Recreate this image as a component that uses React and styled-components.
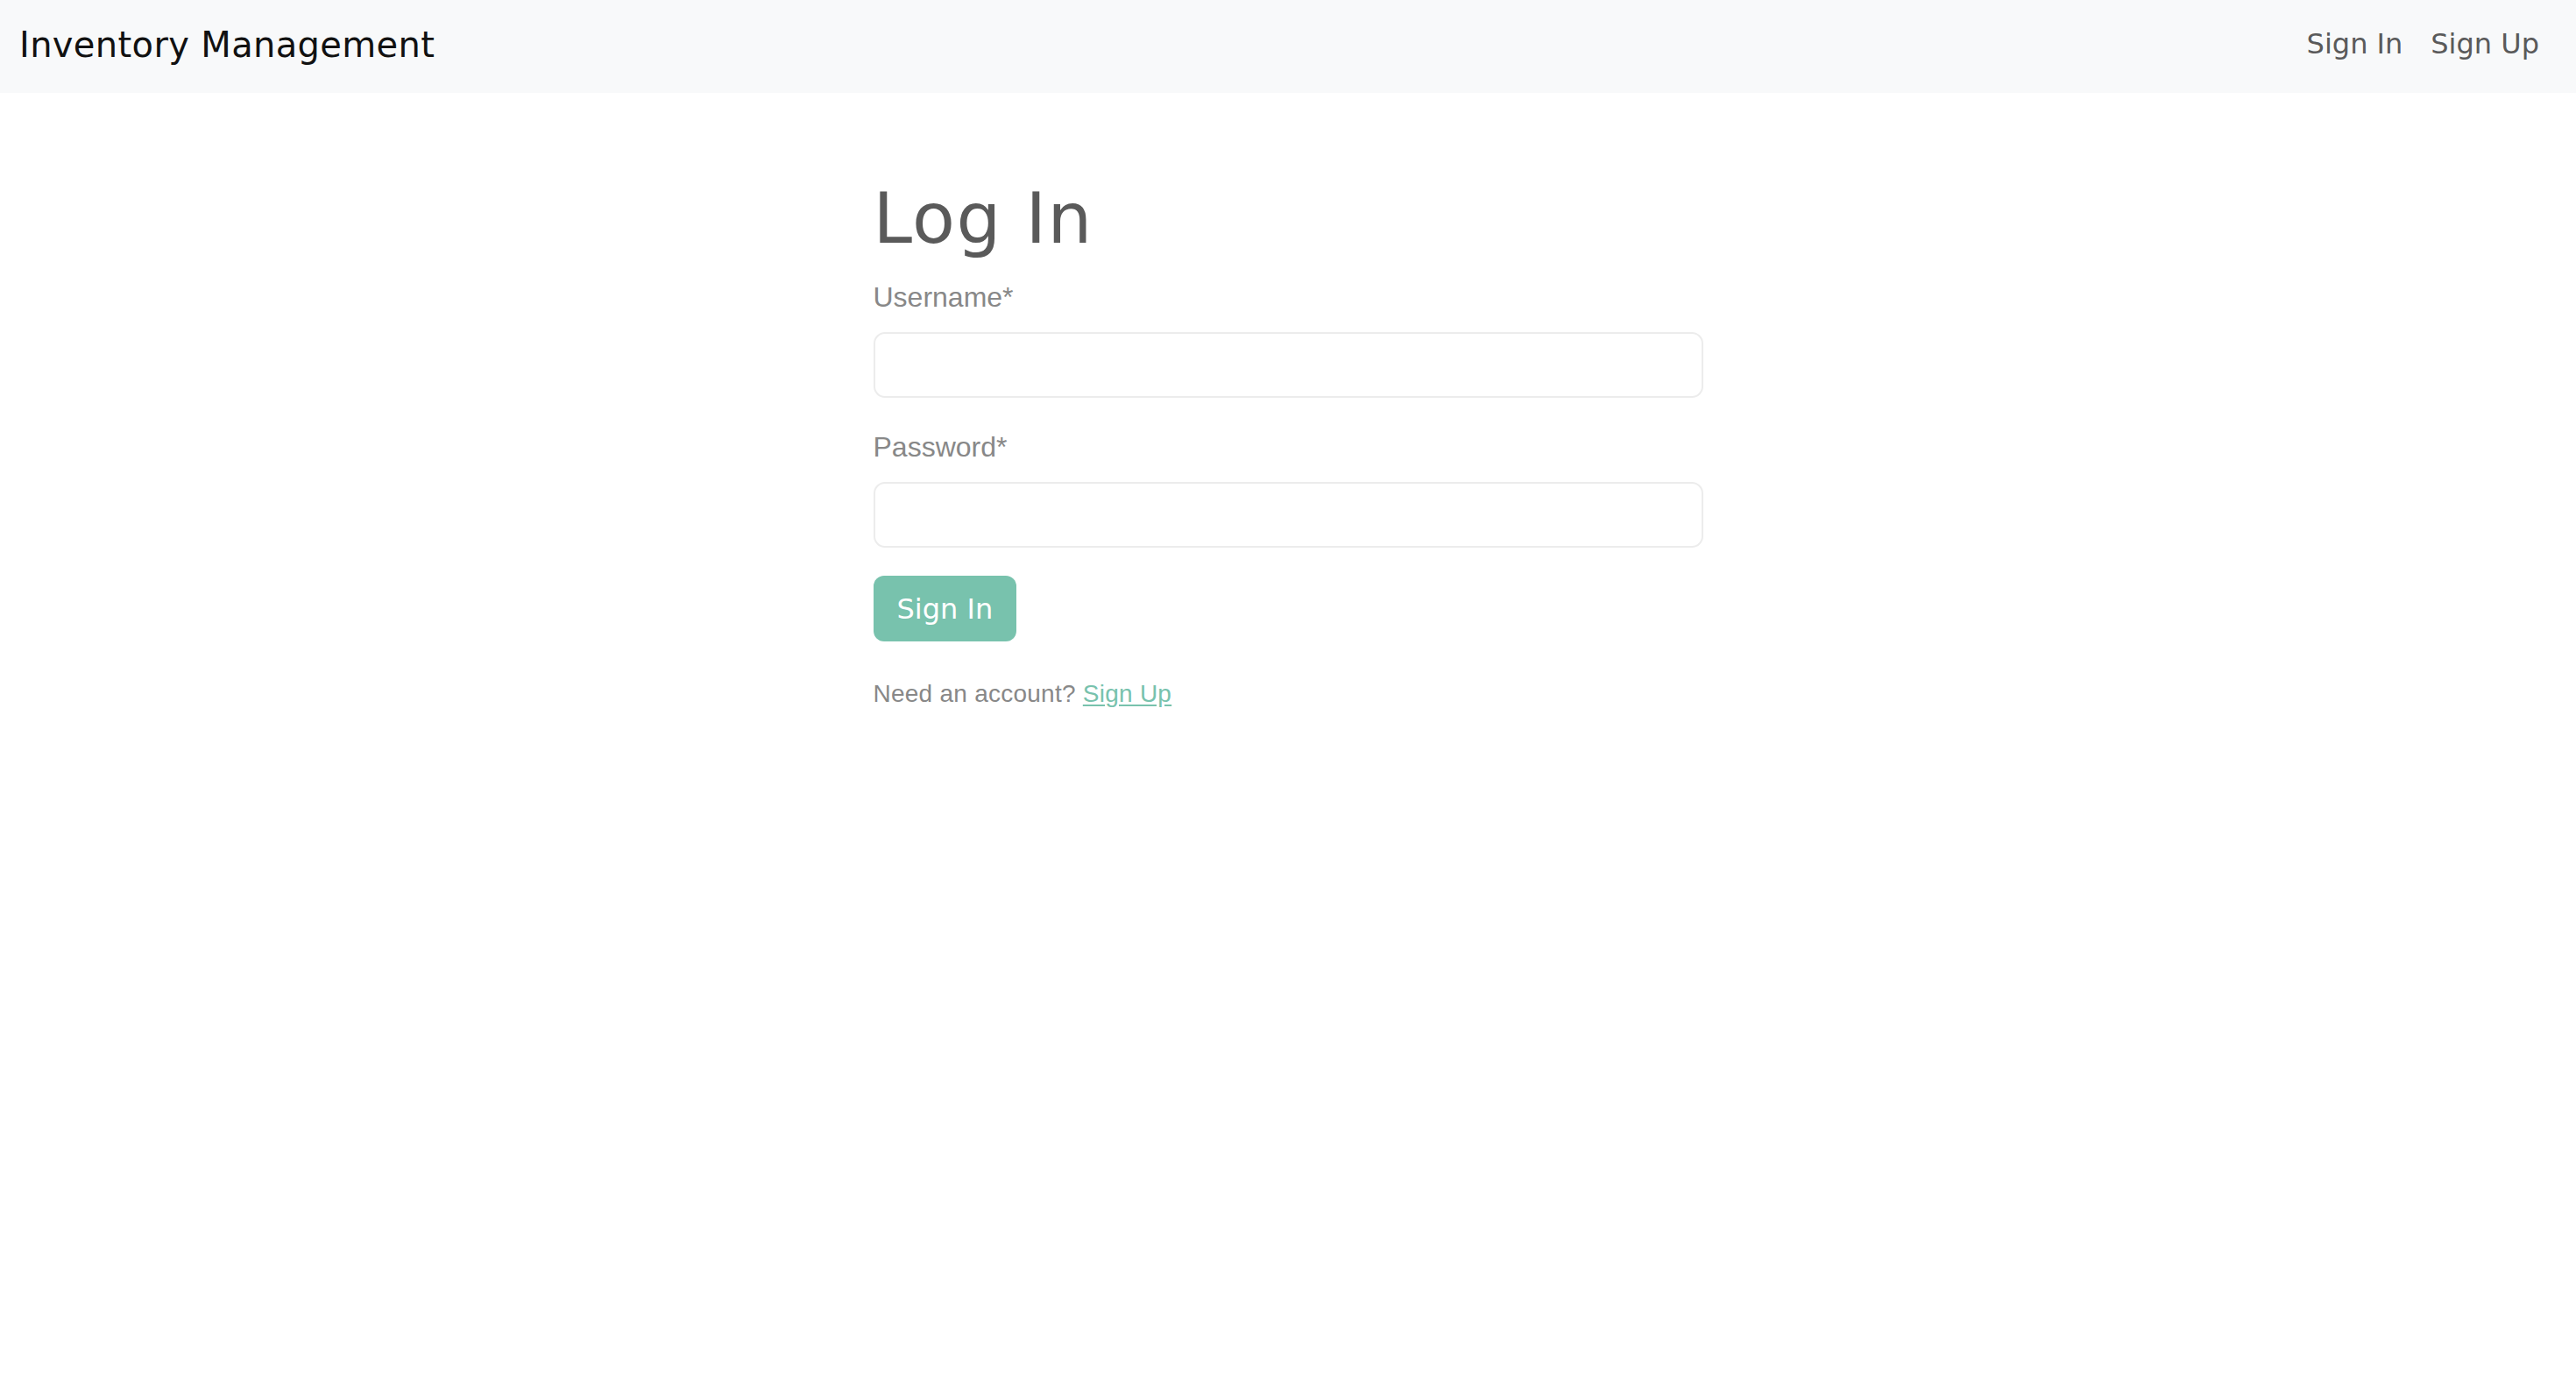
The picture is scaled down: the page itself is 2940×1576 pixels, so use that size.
import React from "react";
import styled, { createGlobalStyle } from "styled-components";

const GlobalStyle = createGlobalStyle`
  html, body {
    margin: 0;
    padding: 0;
    background: #ffffff;
  }
  body {
    font-family: "Liberation Sans", Arial, sans-serif;
    color: #888888;
  }
  * { box-sizing: border-box; }
`;

const heading = `"DejaVu Sans", "Open Sans", sans-serif`;

const Navbar = styled.nav`
  height: 106px;
  background: #f8f9fa;
  display: flex;
  align-items: flex-start;
  justify-content: space-between;
  padding: 0 26px 0 22px;
`;

const Brand = styled.a`
  font-family: ${heading};
  font-size: 40px;
  line-height: 60px;
  letter-spacing: 0.35px;
  margin-top: 21px;
  color: #111111;
  text-decoration: none;
`;

const NavLinks = styled.div`
  display: flex;
  align-items: baseline;
  margin-top: 26px;
`;

const NavLink = styled.a`
  font-family: ${heading};
  font-size: 32px;
  line-height: 48px;
  color: #5a5a5a;
  text-decoration: none;
  padding: 0 16px;
`;

const Main = styled.main`
  width: 947px;
  margin: 96px auto 0;
  display: flex;
  flex-direction: column;
`;

const Title = styled.h1`
  font-family: ${heading};
  font-weight: 400;
  font-size: 80px;
  line-height: 96px;
  letter-spacing: 1.4px;
  color: #5a5a5a;
  margin: 0 0 17px;
`;

const Form = styled.form`
  display: flex;
  flex-direction: column;
`;

const Group = styled.div`
  display: flex;
  flex-direction: column;
  margin-bottom: 32px;
`;

const Label = styled.label`
  font-size: 32px;
  line-height: 48px;
  color: #888888;
  margin-bottom: 16px;
`;

const Input = styled.input`
  height: 75px;
  width: 100%;
  border: 2px solid #ececec;
  border-radius: 13px;
  background: #ffffff;
  padding: 0 24px;
  font-size: 32px;
  font-family: inherit;
  color: #5a5a5a;
  outline: none;
`;

const Button = styled.button`
  align-self: flex-start;
  height: 75px;
  padding: 0 27px;
  border: none;
  border-radius: 12px;
  background: #78c2ad;
  color: #ffffff;
  font-family: ${heading};
  font-size: 32px;
  line-height: 48px;
  display: inline-flex;
  align-items: center;
  cursor: pointer;
`;

const Footnote = styled.p`
  margin: 39px 0 0;
  font-size: 28px;
  line-height: 42px;
  letter-spacing: 0.25px;
  color: #888888;
`;

const FootLink = styled.a`
  color: #78c2ad;
  text-decoration: underline;
  text-underline-offset: 3px;
`;

export default function App() {
  return (
    <>
      <GlobalStyle />
      <Navbar>
        <Brand href="#">Inventory Management</Brand>
        <NavLinks>
          <NavLink href="#">Sign In</NavLink>
          <NavLink href="#">Sign Up</NavLink>
        </NavLinks>
      </Navbar>
      <Main>
        <Title>Log In</Title>
        <Form onSubmit={(e) => e.preventDefault()}>
          <Group>
            <Label htmlFor="username">Username*</Label>
            <Input id="username" type="text" />
          </Group>
          <Group>
            <Label htmlFor="password">Password*</Label>
            <Input id="password" type="password" />
          </Group>
          <Button type="submit">Sign In</Button>
        </Form>
        <Footnote>
          Need an account? <FootLink href="#">Sign Up</FootLink>
        </Footnote>
      </Main>
    </>
  );
}
